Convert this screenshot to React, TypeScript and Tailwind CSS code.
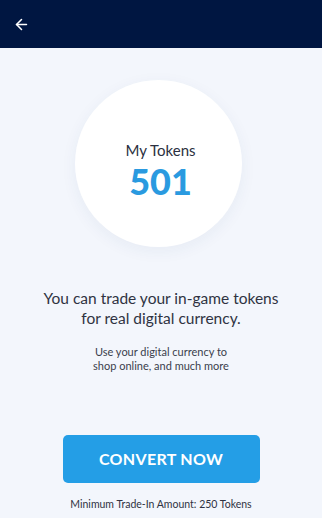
import { ArrowLeft } from "lucide-react";

export default function App() {
  return (
    <div
      className="w-[322px] h-[518px] flex flex-col bg-[#f3f6fc] overflow-hidden"
      style={{ fontFamily: "Lato, 'Open Sans', sans-serif" }}
    >
      {/* header */}
      <header className="h-[48px] shrink-0 bg-[#001641] flex items-center px-[13px]">
        <ArrowLeft className="w-[17px] h-[17px] text-white" strokeWidth={2.2} />
      </header>

      <main className="flex flex-col items-center">
        {/* token bubble */}
        <div className="mt-[32px] mr-[5px] w-[167px] h-[167px] rounded-full bg-white shadow-[0_4px_16px_rgba(30,60,120,0.06)] flex flex-col items-center pt-[61px] pl-[4px]">
          <span className="text-[15px] leading-[18px] text-[#2b3040]">My Tokens</span>
          <span className="mt-[2px] text-[36px] leading-[40px] font-black text-[#2a9ae0]">501</span>
        </div>

        <p className="mt-[41px] text-[15.5px] leading-[20px] text-[#2f3342] text-center">
          You can trade your in-game tokens
          <br />
          for real digital currency.
        </p>

        <p className="mt-[17px] text-[11px] leading-[14px] text-[#3a3e4c] text-center">
          Use your digital currency to
          <br />
          shop online, and much more
        </p>

        <button className="mt-[62px] w-[197px] h-[48px] rounded-[5px] bg-[#249ee6] text-white text-[16px] font-bold tracking-[0.3px]">
          CONVERT NOW
        </button>

        <p className="mt-[15px] text-[10.5px] leading-[13px] text-[#2f3342]">
          Minimum Trade-In Amount: 250 Tokens
        </p>
      </main>
    </div>
  );
}
